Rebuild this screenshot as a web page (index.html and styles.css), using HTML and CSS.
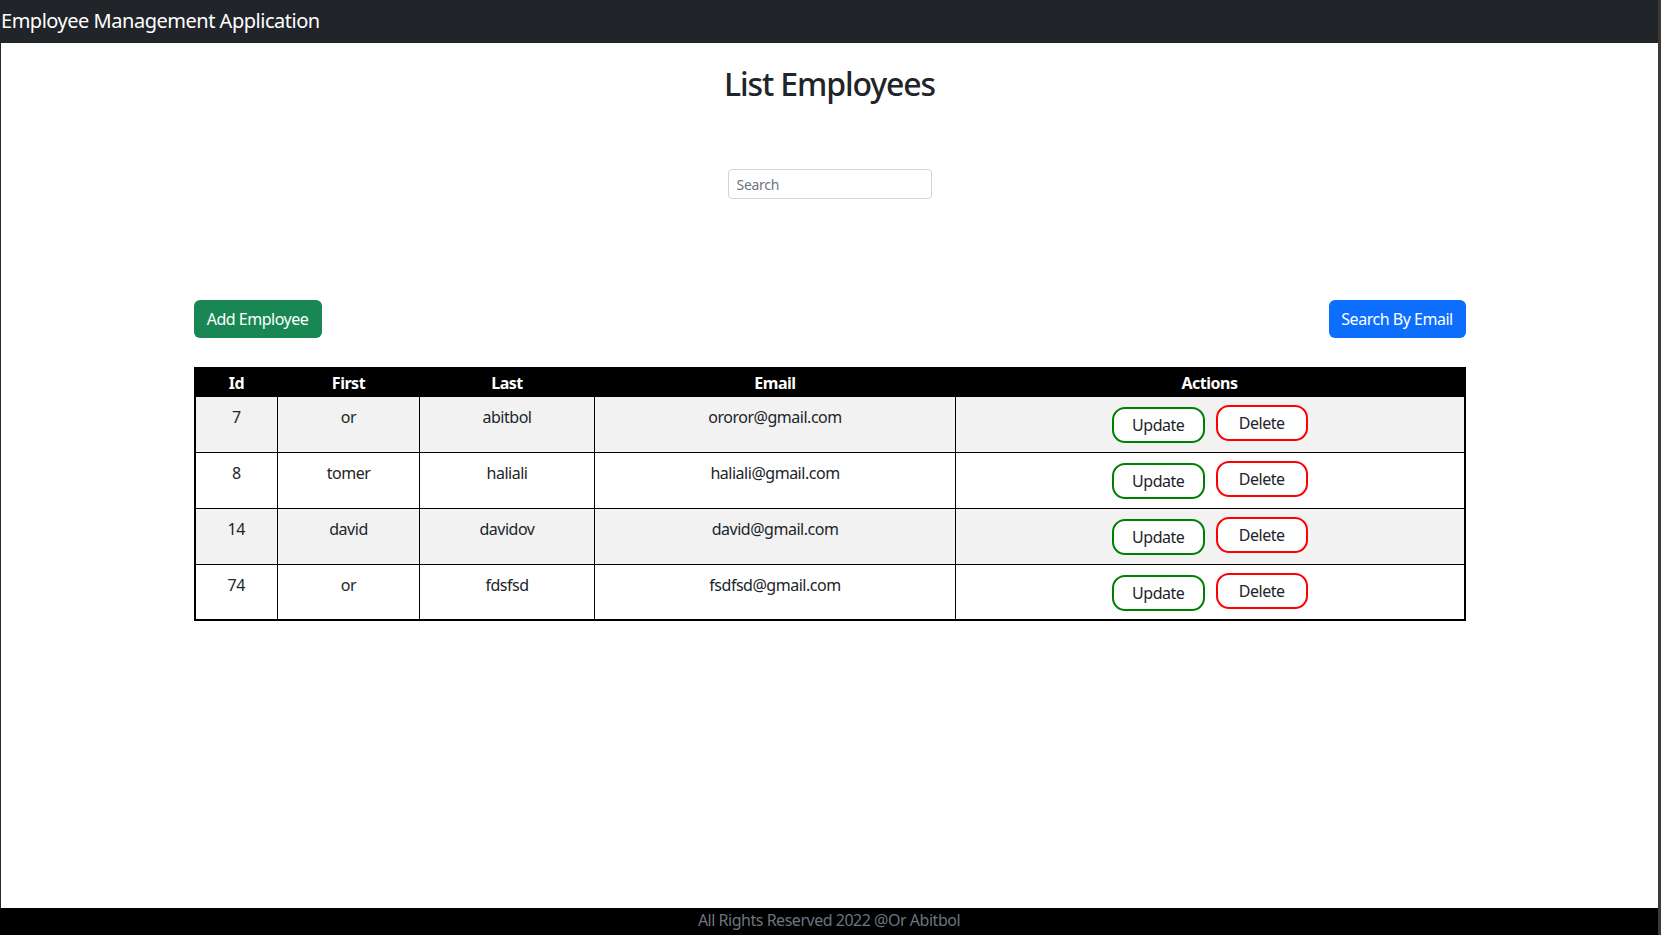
FILE: index.html
```html
<!DOCTYPE html>
<html lang="en">
<head>
<meta charset="utf-8">
<title>Employee Management Application</title>
<link rel="stylesheet" href="styles.css">
</head>
<body>
<div class="frame">
  <header class="navbar">
    <span class="brand">Employee Management Application</span>
  </header>
  <main class="page">
    <h2 class="title">List Employees</h2>
    <div class="search-wrap">
      <input class="search" type="text" placeholder="Search">
    </div>
    <div class="container">
      <div class="toolbar">
        <button class="btn btn-success">Add Employee</button>
        <button class="btn btn-primary">Search By Email</button>
      </div>
      <table class="emp-table">
        <thead>
          <tr>
            <th class="c-id">Id</th>
            <th class="c-first">First</th>
            <th class="c-last">Last</th>
            <th class="c-email">Email</th>
            <th class="c-actions">Actions</th>
          </tr>
        </thead>
        <tbody>
          <tr class="odd">
            <td>7</td><td>or</td><td>abitbol</td><td>ororor@gmail.com</td>
            <td class="actions"><button class="act act-update">Update</button><button class="act act-delete">Delete</button></td>
          </tr>
          <tr>
            <td>8</td><td>tomer</td><td>haliali</td><td>haliali@gmail.com</td>
            <td class="actions"><button class="act act-update">Update</button><button class="act act-delete">Delete</button></td>
          </tr>
          <tr class="odd">
            <td>14</td><td>david</td><td>davidov</td><td>david@gmail.com</td>
            <td class="actions"><button class="act act-update">Update</button><button class="act act-delete">Delete</button></td>
          </tr>
          <tr>
            <td>74</td><td>or</td><td>fdsfsd</td><td>fsdfsd@gmail.com</td>
            <td class="actions"><button class="act act-update">Update</button><button class="act act-delete">Delete</button></td>
          </tr>
        </tbody>
      </table>
    </div>
  </main>
  <footer class="footer">All Rights Reserved 2022 @Or Abitbol</footer>
</div>
</body>
</html>
```

FILE: styles.css
```css
* { box-sizing: border-box; }

html, body {
  margin: 0;
  padding: 0;
  height: 100%;
}

body {
  font-family: "Segoe UI", "Noto Sans", "Open Sans", sans-serif;
  color: #212529;
  background: #3d3a35;
  font-size: 16px;
  letter-spacing: -0.03em;
}

.frame {
  width: 1658px;
  height: 935px;
  background: #ffffff;
  border-left: 1px solid #2b2b25;
  display: flex;
  flex-direction: column;
}

.navbar {
  height: 43px;
  background: #212529;
  margin-left: -1px;
  display: flex;
  align-items: center;
  padding-left: 1px;
}

.brand {
  color: #ffffff;
  font-size: 20px;
  line-height: 30px;
  margin-top: -1px;
}

.title {
  font-size: 32px;
  font-weight: 500;
  line-height: 38px;
  letter-spacing: -0.035em;
  margin: 22px 0 0;
}

.page {
  flex: 1;
  display: flex;
  flex-direction: column;
  align-items: center;
}

.search-wrap {
  margin-top: 66px;
}

.search {
  width: 204px;
  height: 30px;
  border: 1px solid #ced4da;
  border-radius: 4px;
  padding: 0 8px;
  font-family: inherit;
  font-size: 14px;
  letter-spacing: -0.02em;
  color: #212529;
}

.search::placeholder { color: #6c757d; }

.container {
  width: 1272px;
  margin-top: 101px;
}

.toolbar {
  display: flex;
  justify-content: space-between;
}

.btn {
  height: 38px;
  border: none;
  border-radius: 6px;
  color: #ffffff;
  font-family: inherit;
  font-size: 16px;
  letter-spacing: -0.03em;
  padding: 0;
  white-space: nowrap;
}

.btn-success { background: #198754; width: 128px; }
.btn-primary { background: #0d6efd; width: 137px; }

.emp-table {
  margin-top: 29px;
  width: 100%;
  border-collapse: collapse;
  border: 2px solid #000000;
}

.emp-table th {
  background: #000000;
  color: #ffffff;
  font-weight: 700;
  height: 28px;
  padding: 2px 0 0;
  line-height: 24px;
  text-align: center;
}

.c-id { width: 83px; }
.c-first { width: 142px; }
.c-last { width: 175px; }
.c-email { width: 361px; }

.emp-table td {
  border: 1px solid #000000;
  text-align: center;
  vertical-align: top;
  padding: 8px 8px;
  line-height: 24px;
  height: 56px;
}

.emp-table tr.odd td { background: #f2f2f2; }

.actions {
  white-space: nowrap;
}

.act {
  height: 36px;
  background: #ffffff;
  border-radius: 13px;
  font-family: inherit;
  font-size: 16px;
  letter-spacing: -0.03em;
  color: #212529;
  padding: 0;
  vertical-align: top;
}

.act-update {
  width: 93px;
  border: 2px solid #008000;
  margin-top: 2px;
  margin-right: 11px;
}

.act-delete {
  width: 92px;
  border: 2px solid #ff0000;
}

.footer {
  height: 27px;
  background: #000000;
  color: #6c757d;
  text-align: center;
  line-height: 24px;
  margin-left: -1px;
}
```
